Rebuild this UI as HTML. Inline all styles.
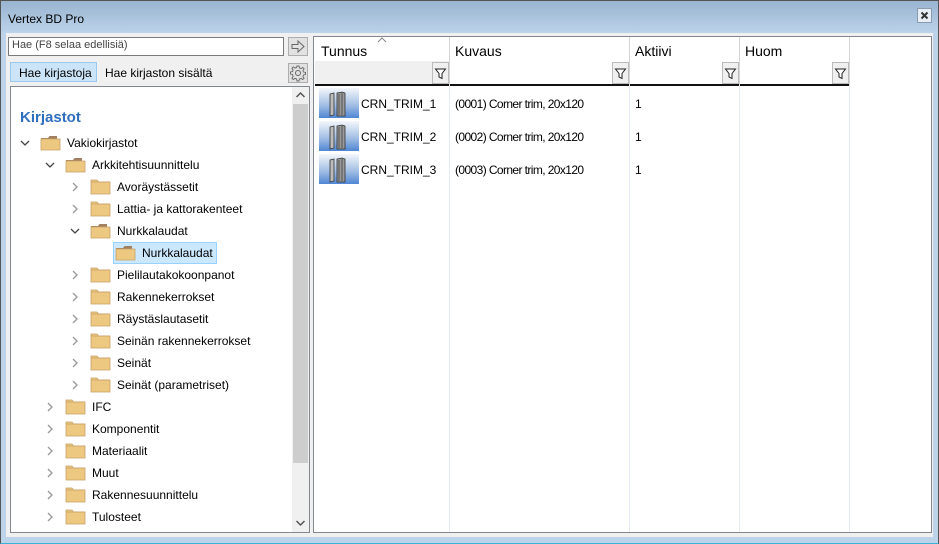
<!DOCTYPE html>
<html><head><meta charset="utf-8"><style>
*{box-sizing:border-box;margin:0;padding:0}
body{width:939px;height:544px;overflow:hidden;font-family:"Liberation Sans",sans-serif;font-size:12px;color:#000;background:#bdd3eb;position:relative}
.a{position:absolute}
.win{left:0;top:0;width:939px;height:544px;border:1px solid #555;border-bottom-color:#3bb3d8;background:linear-gradient(#99b4d0,#bcd3ea 32px)}
.inner{left:6px;top:33px;width:927px;height:504px;background:#f0f0f0}
.t{white-space:nowrap}
</style></head><body>
<div class="a win"></div>
<div class="a t" style="left:8px;top:12px;font-size:12px">Vertex BD Pro</div>
<div class="a" style="left:917px;top:8px;width:15px;height:15px;border:1px solid #8a9bb0;background:#e8eef5"><svg width="13" height="13" style="position:absolute;left:0;top:0"><path d="M3.5 3.5L9.5 9.5M9.5 3.5L3.5 9.5" stroke="#333" stroke-width="2"/></svg></div>
<div class="a inner"></div>
<div class="a" style="left:8px;top:37px;width:276px;height:19px;border:1px solid #7a7a7a;background:#fff"></div>
<div class="a t" style="left:12px;top:39px;font-size:11px;color:#444">Hae (F8 selaa edellisiä)</div>
<div class="a" style="left:288px;top:37px;width:20px;height:19px;border:1px solid #adadad;background:#e1e1e1"><svg width="18" height="17"><path d="M3 6.5h6V3l6 5.5-6 5.5v-3.5H3z" fill="none" stroke="#666" stroke-width="1"/></svg></div>
<div class="a" style="left:10px;top:62px;width:87px;height:20px;border:1px solid #99c9ef;background:#cce4f7"></div>
<div class="a t" style="left:19px;top:66px">Hae kirjastoja</div>
<div class="a t" style="left:105px;top:66px">Hae kirjaston sisältä</div>
<div class="a" style="left:288px;top:63px;width:20px;height:20px;border:1px solid #adadad;background:#e1e1e1"><svg width="18" height="18"><circle cx="9" cy="9" r="2.5" fill="none" stroke="#666"/><path d="M8 2h2l.5 2 1.5.6 1.7-1.2 1.4 1.4-1.2 1.7.6 1.5 2 .5v2l-2 .5-.6 1.5 1.2 1.7-1.4 1.4-1.7-1.2-1.5.6-.5 2H8l-.5-2-1.5-.6-1.7 1.2-1.4-1.4 1.2-1.7L3.5 10.5l-2-.5V8l2-.5.6-1.5-1.2-1.7 1.4-1.4L6 4.1l1.5-.6z" fill="none" stroke="#666" stroke-width="0.9"/></svg></div>
<div class="a" style="left:10px;top:86px;width:300px;height:447px;border:1px solid #828790;background:#fff;overflow:hidden">
 <div class="a" style="left:281px;top:0;width:17px;height:445px;background:#f0f0f0"></div>
 <div class="a" style="left:282px;top:17px;width:15px;height:359px;background:#cdcdcd"></div>
 <svg class="a" style="left:284px;top:4px" width="11" height="8"><path d="M1.5 6l4-4 4 4" fill="none" stroke="#555" stroke-width="1.5"/></svg>
 <svg class="a" style="left:284px;top:432px" width="11" height="8"><path d="M1.5 2l4 4 4-4" fill="none" stroke="#555" stroke-width="1.5"/></svg>
</div>
<div class="a t" style="left:20px;top:109px;font-size:15px;font-weight:bold;color:#2f6fbd">Kirjastot</div>
<div id="tree"></div>
<div class="a" style="left:313px;top:36px;width:619px;height:497px;border:1px solid #828790;background:#fff"></div>
<div class="a" style="left:315px;top:61px;width:134px;height:24px;background:#f0f0f0"></div>
<div class="a" style="left:315px;top:84px;width:534px;height:2px;background:#111"></div>
<div class="a" style="left:449px;top:37px;width:1px;height:495px;background:#e5ecf5"></div>
<div class="a" style="left:629px;top:37px;width:1px;height:495px;background:#e5ecf5"></div>
<div class="a" style="left:739px;top:37px;width:1px;height:495px;background:#e5ecf5"></div>
<div class="a" style="left:849px;top:37px;width:1px;height:495px;background:#e5ecf5"></div>
<div class="a" style="left:449px;top:37px;width:1px;height:48px;background:#d5d5d5"></div>
<div class="a" style="left:629px;top:37px;width:1px;height:48px;background:#d5d5d5"></div>
<div class="a" style="left:739px;top:37px;width:1px;height:48px;background:#d5d5d5"></div>
<div class="a" style="left:849px;top:37px;width:1px;height:48px;background:#d5d5d5"></div>
<div class="a t" style="left:321px;top:43px;font-size:14px">Tunnus</div>
<div class="a t" style="left:455px;top:43px;font-size:14px">Kuvaus</div>
<div class="a t" style="left:635px;top:43px;font-size:14px">Aktiivi</div>
<div class="a t" style="left:745px;top:43px;font-size:14px">Huom</div>
<svg class="a" style="left:377px;top:37px" width="10" height="6"><path d="M1 5l4-4 4 4" fill="none" stroke="#888"/></svg>
<div id="filt"></div>
<div id="rows"></div>
<script>
var f='';[432,612,722,832].forEach(function(x){f+='<div class="a" style="left:'+x+'px;top:62px;width:17px;height:22px;border:1px solid #bbb;background:#f0f0f0"><svg width="15" height="20"><path d="M2.5 6h10l-3.5 4.5v5l-3-1.5v-3.5z" fill="#fff" stroke="#222"/></svg></div>'});
document.getElementById('filt').innerHTML=f;
var r='';[1,2,3].forEach(function(n,i){var y=88+i*33;
r+='<div class="a" style="left:319px;top:'+y+'px;width:40px;height:30px;background:linear-gradient(#f4f7fb,#9dbbe3 60%,#4f86d4)"><svg width="40" height="30"><path d="M11 6l4-1v22l-4 1z" fill="#bbb" stroke="#333" stroke-width="0.8"/><path d="M18 5l5-1 3 1v23h-8z" fill="#999" stroke="#333" stroke-width="0.8"/><path d="M20 6v21M23 5v22" stroke="#444" stroke-width="0.8"/></svg></div>'+
'<div class="a t" style="left:361px;top:'+(y+9)+'px">CRN_TRIM_'+n+'</div>'+
'<div class="a t" style="left:455px;top:'+(y+9)+'px;font-size:12px;letter-spacing:-0.6px">(000'+n+') Corner trim, 20x120</div>'+
'<div class="a t" style="left:635px;top:'+(y+9)+'px">1</div>'});
document.getElementById('rows').innerHTML=r;
var items=[[0,'Vakiokirjastot',1],[1,'Arkkitehtisuunnittelu',1],[2,'Avoräystässetit',0],[2,'Lattia- ja kattorakenteet',0],[2,'Nurkkalaudat',1],[3,'Nurkkalaudat',2],[2,'Pielilautakokoonpanot',0],[2,'Rakennekerrokset',0],[2,'Räystäslautasetit',0],[2,'Seinän rakennekerrokset',0],[2,'Seinät',0],[2,'Seinät (parametriset)',0],[1,'IFC',0],[1,'Komponentit',0],[1,'Materiaalit',0],[1,'Muut',0],[1,'Rakennesuunnittelu',0],[1,'Tulosteet',0]];
var t='';items.forEach(function(it,i){var y=143+i*22,l=it[0],x=20+l*25;
var open=it[2]==1;
if(it[2]==2){t+='<div class="a" style="left:'+(x+18)+'px;top:'+(y-11)+'px;width:104px;height:22px;background:#cce8ff;border:1px solid #99d1ff"></div>'}
else t+='<svg class="a" style="left:'+(x)+'px;top:'+(y-5)+'px" width="10" height="10">'+(open?'<path d="M1 3l4 4 4-4" fill="none" stroke="#444" stroke-width="1.3"/>':'<path d="M3 1l4 4-4 4" fill="none" stroke="#999" stroke-width="1.3"/>')+'</svg>';
t+='<svg class="a" style="left:'+(x+20)+'px;top:'+(y-9)+'px" width="22" height="18">'+(open||it[2]==2?'<path d="M1 4h7l1.5-2H17v3H1z" fill="#a08060"/><path d="M1 5h19v11H1z" fill="#ecc881" stroke="#c9a066" stroke-width="0.8"/>':'<path d="M1 2h6l1.5 2H20v12H1z" fill="#ecc881" stroke="#c9a066" stroke-width="0.8"/><path d="M1 4h19" stroke="#c9a066" stroke-width="0.8"/>')+'</svg>';
t+='<div class="a t" style="left:'+(x+47)+'px;top:'+(y-7)+'px">'+it[1]+'</div>'});
document.getElementById('tree').innerHTML=t;
</script>
</body></html>
